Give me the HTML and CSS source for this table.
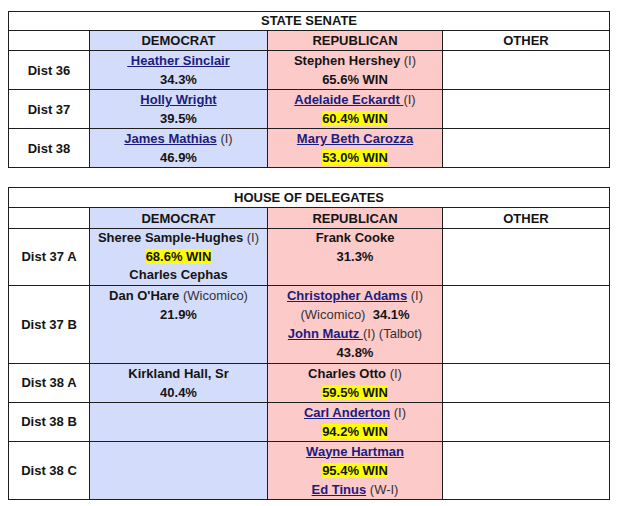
FILE: index.html
```html
<!DOCTYPE html>
<html>
<head>
<meta charset="utf-8">
<link rel="stylesheet" href="styles.css">
</head>
<body>
<table class="results senate">
  <colgroup><col class="c-dist"><col class="c-dem"><col class="c-rep"><col class="c-oth"></colgroup>
  <tr><td class="title" colspan="4">STATE SENATE</td></tr>
  <tr class="head"><td></td><td class="dem">DEMOCRAT</td><td class="rep">REPUBLICAN</td><td>OTHER</td></tr>
  <tr>
    <td class="dist">Dist 36</td>
    <td class="dem"><a href="#">&nbsp;Heather Sinclair</a><br>34.3%</td>
    <td class="rep">Stephen Hershey <span class="note">(I)</span><br>65.6% WIN</td>
    <td></td>
  </tr>
  <tr>
    <td class="dist">Dist 37</td>
    <td class="dem"><a href="#">Holly Wright</a><br>39.5%</td>
    <td class="rep"><a href="#">Adelaide Eckardt&nbsp;</a><span class="note">(I)</span><br><span class="win">60.4% WIN</span></td>
    <td></td>
  </tr>
  <tr>
    <td class="dist">Dist 38</td>
    <td class="dem"><a href="#">James Mathias</a> <span class="note">(I)</span><br>46.9%</td>
    <td class="rep"><a href="#">Mary Beth Carozza</a><br><span class="win">53.0% WIN</span></td>
    <td></td>
  </tr>
</table>

<table class="results house">
  <colgroup><col class="c-dist"><col class="c-dem"><col class="c-rep"><col class="c-oth"></colgroup>
  <tr><td class="title" colspan="4">HOUSE OF DELEGATES</td></tr>
  <tr class="head"><td></td><td class="dem">DEMOCRAT</td><td class="rep">REPUBLICAN</td><td>OTHER</td></tr>
  <tr class="r3a">
    <td class="dist">Dist 37 A</td>
    <td class="dem">Sheree Sample-Hughes <span class="note">(I)</span><br><span class="win">68.6% WIN</span><br>Charles Cephas</td>
    <td class="rep top">Frank Cooke<br>31.3%</td>
    <td></td>
  </tr>
  <tr class="r4">
    <td class="dist">Dist 37 B</td>
    <td class="dem top">Dan O'Hare <span class="note">(Wicomico)</span><br>21.9%</td>
    <td class="rep"><a href="#">Christopher Adams</a> <span class="note">(I)</span><br><span class="note">(Wicomico)</span>&nbsp; 34.1%<br><a href="#">John Mautz&nbsp;</a><span class="note">(I) (Talbot)</span><br>43.8%</td>
    <td></td>
  </tr>
  <tr>
    <td class="dist">Dist 38 A</td>
    <td class="dem">Kirkland Hall, Sr<br>40.4%</td>
    <td class="rep">Charles Otto <span class="note">(I)</span><br><span class="win">59.5% WIN</span></td>
    <td></td>
  </tr>
  <tr>
    <td class="dist">Dist 38 B</td>
    <td class="dem"></td>
    <td class="rep"><a href="#">Carl Anderton</a> <span class="note">(I)</span><br><span class="win">94.2% WIN</span></td>
    <td></td>
  </tr>
  <tr class="r3">
    <td class="dist">Dist 38 C</td>
    <td class="dem"></td>
    <td class="rep"><a href="#">Wayne Hartman</a><br><span class="win">95.4% WIN</span><br><a href="#">Ed Tinus</a> <span class="note">(W-I)</span></td>
    <td></td>
  </tr>
</table>
</body>
</html>
```

FILE: styles.css
```css
body {
  margin: 11px 8px 0 8px;
  background: #ffffff;
  font-family: "Liberation Sans", Arial, sans-serif;
  font-size: 13px;
  font-weight: bold;
  color: #141414;
}

.results {
  border-collapse: collapse;
  table-layout: fixed;
  width: 601px;
  margin: 0 0 19px 0;
}

.c-dist { width: 81px; }
.c-dem { width: 178px; }
.c-rep { width: 175px; }
.c-oth { width: 167px; }

.results td {
  border: 1px solid #1e1e1e;
  padding: 0;
  line-height: 19px;
  text-align: center;
  vertical-align: middle;
}

.results td.title {
  line-height: 18px;
}

.house td.title {
  line-height: 19px;
}

.senate tr td { height: 38px; }
.senate tr.head td { height: 19px; }
.senate tr td.title { height: 18px; }

.house tr td { height: 37px; }
.house tr.r3a td { height: 55px; line-height: 18.5px; }
.house tr.r3 td { height: 56px; }
.house tr.r4 td { height: 77px; }
.house tr.head td { height: 20px; }
.house tr td.title { height: 19px; }

.results td.top { vertical-align: top; }

.dem { background: #d3dcfa; }
.rep { background: #fdcaca; }

.results a {
  color: #1c1c7c;
  text-decoration: underline;
}

.note {
  font-weight: normal;
  color: #333333;
}

.win {
  background: #ffff00;
}
```
